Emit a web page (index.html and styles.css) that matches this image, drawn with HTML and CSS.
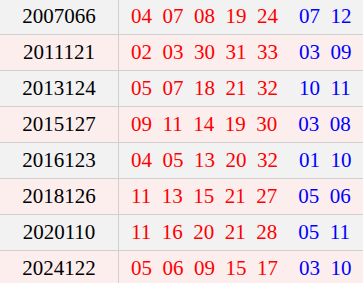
FILE: index.html
```html
<!DOCTYPE html>
<html lang="zh-CN">
<head>
  <meta charset="UTF-8" />
  <meta name="viewport" content="width=device-width, initial-scale=1.0"/>
  <title>开奖号码</title>
  <link rel="stylesheet" href="styles.css">
</head>
<body>
  <table class="draws">
    <tbody id="drawRows"></tbody>
  </table>

  <script>
    const draws = [
      ['2007066', ['04', '07', '08', '19', '24'], ['07', '12']],
      ['2011121', ['02', '03', '30', '31', '33'], ['03', '09']],
      ['2013124', ['05', '07', '18', '21', '32'], ['10', '11']],
      ['2015127', ['09', '11', '14', '19', '30'], ['03', '08']],
      ['2016123', ['04', '05', '13', '20', '32'], ['01', '10']],
      ['2018126', ['11', '13', '15', '21', '27'], ['05', '06']],
      ['2020110', ['11', '16', '20', '21', '28'], ['05', '11']],
      ['2024122', ['05', '06', '09', '15', '17'], ['03', '10']]
    ];

    const rows = document.getElementById('drawRows');

    function balls(list, cls) {
      return `<span class="${cls}">` + list.map(n => `<span>${n}</span>`).join('') + '</span>';
    }

    draws.forEach(([issue, front, back]) => {
      const tr = document.createElement('tr');
      tr.innerHTML = `<td class="issue">${issue}</td>
        <td class="nums">${balls(front, 'front')}${balls(back, 'back')}</td>`;
      rows.appendChild(tr);
    });
  </script>
</body>
</html>
```
FILE: styles.css
```css
body {
  margin: 0;
  font-family: "Liberation Serif", "Times New Roman", serif;
  overflow: hidden;
}
.draws {
  border-collapse: collapse;
  margin-top: -1px;
  width: 380px;
  font-size: 21px;
}
.draws td {
  height: 35px;
  line-height: 35px;
  padding: 0;
  border-bottom: 1px solid #d0d0d0;
}
.draws tr:nth-child(odd) {
  background: #f2f2f2;
}
.draws tr:nth-child(even) {
  background: #fdeeee;
}
.issue {
  width: 118px;
  text-align: center;
  color: #000;
  border-right: 1px solid #d0d0d0;
}
.nums {
  padding-left: 12px !important;
  white-space: nowrap;
}
.front, .back {
  display: inline-flex;
  gap: 10.5px;
}
.front {
  color: #ff0000;
  margin-right: 21px;
}
.back {
  color: #0000ff;
}
```
